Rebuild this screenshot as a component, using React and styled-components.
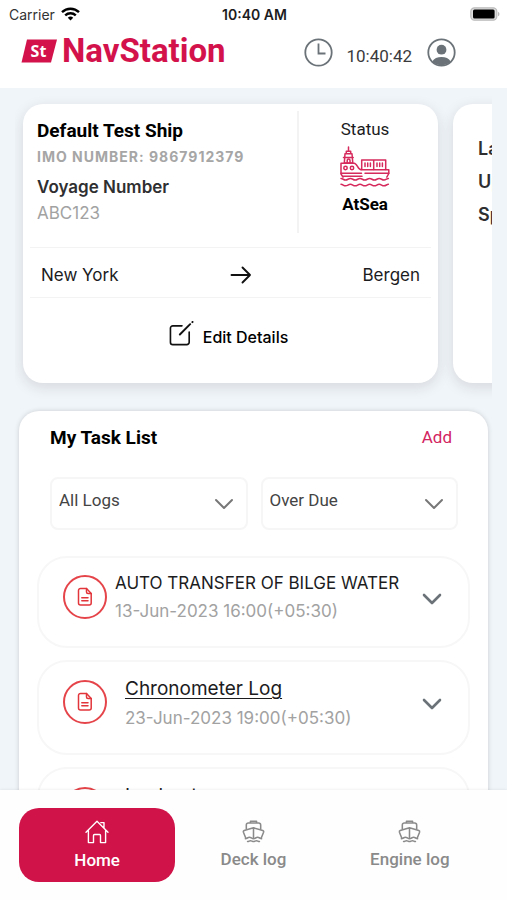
import React from "react";
import styled, { createGlobalStyle, css } from "styled-components";

const GlobalStyle = createGlobalStyle`
  *, *::before, *::after { box-sizing: border-box; }
  body {
    margin: 0;
    background: #f0f5f9;
    color: #1c1c1e;
    font-family: Inter, "Liberation Sans", sans-serif;
  }
  button, select { font: inherit; color: inherit; }
  h1, h2, p { margin: 0; }
`;

const roboto = css`
  font-family: Roboto, "Liberation Sans", sans-serif;
`;

const Screen = styled.div`
  display: flex;
  flex-direction: column;
  height: 100vh;
  overflow: hidden;
`;

const StatusBar = styled.div`
  display: grid;
  grid-template-columns: 1fr auto 1fr;
  align-items: center;
  height: 28px;
  padding: 0 7px 0 9px;
  background: #fff;
  font-size: 14px;
`;

const Carrier = styled.span`
  display: flex;
  align-items: center;
  gap: 6px;
  color: #333;
`;

const StatusTime = styled.span`
  font-size: 14px;
  font-weight: 600;
`;

const Battery = styled.svg`
  justify-self: end;
`;

const Header = styled.header`
  display: flex;
  flex: none;
  align-items: flex-start;
  justify-content: space-between;
  height: 60px;
  padding: 8px 51px 0 21px;
  background: #fff;
`;

const Brand = styled.a`
  display: flex;
  align-items: center;
  gap: 5px;
  color: #d3124c;
  text-decoration: none;
`;

const BrandName = styled.span`
  ${roboto}
  font-size: 33px;
  font-weight: 700;
  line-height: 30px;
`;

const HeaderTools = styled.div`
  display: flex;
  align-items: center;
  gap: 13px;
  color: #6b7378;
`;

const Clock = styled.time`
  ${roboto}
  padding: 8px 2px 0 0;
  font-size: 17px;
  line-height: 24px;
  color: #3a3a3c;
`;

const IconButton = styled.button`
  display: flex;
  align-items: center;
  justify-content: center;
  padding: 0;
  border: 0;
  background: none;
  color: #6b7378;
  cursor: pointer;
`;

const Content = styled.main`
  flex: 1;
  min-height: 0;
  overflow: hidden;
`;

const Carousel = styled.section`
  display: flex;
  gap: 15px;
  margin: 0 15px;
  padding: 16px 0 28px 8px;
  overflow: hidden;
`;

const Card = styled.article`
  flex: 0 0 88.5%;
  padding: 0 7px;
  border-radius: 20px;
  background: #fff;
  box-shadow: 0 4px 14px rgba(40, 30, 30, 0.13);
`;

const Voyage = styled.div`
  display: grid;
  grid-template-columns: 1fr 134px;
  height: 144px;
  border-bottom: 1px solid #f3f3f3;
`;

const ShipInfo = styled.div`
  padding: 15px 0 0 7px;
`;

const ShipName = styled.h2`
  ${roboto}
  font-size: 19px;
  font-weight: 700;
  line-height: 24px;
  color: #000;
`;

const ImoNumber = styled.p`
  font-size: 14px;
  font-weight: 700;
  line-height: 28px;
  letter-spacing: 1px;
  color: #a6a6a6;
`;

const FieldLabel = styled.p`
  font-size: 17px;
  font-weight: 600;
  line-height: 32px;
  color: #2f2f31;
`;

const FieldValue = styled.p`
  font-size: 17px;
  line-height: 20px;
  color: #a2a2a2;
`;

const Status = styled.div`
  display: flex;
  flex-direction: column;
  align-items: center;
  margin: 7px 0 14px;
  padding-top: 8px;
  border-left: 2px solid #f3f3f3;
`;

const StatusLabel = styled.span`
  ${roboto}
  margin-bottom: 7px;
  font-size: 17px;
  line-height: 20px;
`;

const StatusValue = styled.strong`
  ${roboto}
  margin-top: 4px;
  font-size: 17px;
  font-weight: 700;
  line-height: 24px;
  color: #000;
`;

const Route = styled.div`
  display: flex;
  align-items: center;
  justify-content: space-between;
  height: 50px;
  padding: 4px 11px 0;
  border-bottom: 1px solid #f3f3f3;
  font-size: 17px;
`;

const EditButton = styled.button`
  display: flex;
  align-items: center;
  justify-content: center;
  gap: 9px;
  width: 100%;
  height: 85px;
  padding: 0 4px 8px 0;
  border: 0;
  background: none;
  color: #000;
  font-size: 16px;
  font-weight: 500;
  cursor: pointer;

  > svg { margin-bottom: 6px; }
`;

const PositionInfo = styled.div`
  padding: 28px 0 0 18px;
  font-size: 18px;
  font-weight: 600;
  line-height: 33px;
  white-space: nowrap;
  color: #2f2f31;
`;

const TaskPanel = styled.section`
  margin: 0 19px;
  padding: 0 18px;
  border-radius: 20px;
  background: #fff;
  box-shadow: 0 0 5px rgba(0, 0, 0, 0.16);
`;

const PanelHead = styled.div`
  display: flex;
  align-items: center;
  justify-content: space-between;
  height: 52px;
  padding: 0 18px 0 13px;
`;

const PanelTitle = styled.h2`
  ${roboto}
  font-size: 19px;
  font-weight: 700;
  color: #000;
`;

const AddButton = styled.button`
  ${roboto}
  padding: 0;
  border: 0;
  background: none;
  font-size: 17px;
  color: #d3245f;
  cursor: pointer;
`;

const Filters = styled.div`
  display: grid;
  grid-template-columns: 1fr 1fr;
  gap: 13px;
  padding: 14px 12px 26px 13px;
`;

const SelectBox = styled.div`
  display: grid;
  align-items: center;

  > * { grid-area: 1 / 1; }

  > svg {
    justify-self: end;
    margin-right: 14px;
    pointer-events: none;
    color: #777;
  }
`;

const Select = styled.select`
  ${roboto}
  appearance: none;
  width: 100%;
  height: 53px;
  padding: 0 32px 8px 7px;
  border: 2px solid #f6f6f6;
  border-radius: 8px;
  background: #fff;
  color: #444;
  font-size: 17px;
`;

const TaskList = styled.ul`
  display: flex;
  flex-direction: column;
  gap: 12px;
  margin: 0;
  padding: 0;
  list-style: none;
`;

const TaskItem = styled.li`
  display: flex;
  align-items: flex-start;
  gap: ${(p) => (p.$linked ? "18px" : "8px")};
  min-height: ${(p) => (p.$linked ? "95px" : "92px")};
  padding: ${(p) => (p.$linked ? "18px" : "17px")} 26px 0 24px;
  border: 2px solid #f7f7f7;
  border-radius: 30px;
`;

const TaskBadge = styled.span`
  display: flex;
  flex: none;
  align-items: center;
  justify-content: center;
  width: 44px;
  height: 44px;
  border: 2px solid #e5454a;
  border-radius: 50%;
  color: #e2353b;
`;

const TaskText = styled.div`
  flex: 1;
  min-width: 0;
  white-space: nowrap;
`;

const TaskTitle = styled.p`
  font-size: 17px;
  line-height: 16px;
`;

const TaskLink = styled.a`
  display: block;
  font-size: 19px;
  line-height: 18px;
  color: #1c1c1e;
  text-decoration: underline;
  text-underline-offset: 3px;
  text-decoration-thickness: 1px;
`;

const TaskDate = styled.p`
  margin-top: 8px;
  font-size: 17px;
  line-height: 24px;
  color: #a2a2a2;
`;

const Expand = styled(IconButton)`
  height: 48px;
`;

const NavBar = styled.nav`
  display: grid;
  flex: none;
  grid-template-columns: repeat(3, 1fr);
  height: 110px;
  padding: 18px 19px;
  background: #fefefe;
  box-shadow: 0 0 3px rgba(0, 0, 0, 0.1);
`;

const NavItem = styled.a`
  ${roboto}
  display: flex;
  flex-direction: column;
  align-items: center;
  gap: 4px;
  padding-top: 12px;
  border-radius: 20px;
  background: ${(p) => (p.$active ? "#d01349" : "transparent")};
  color: ${(p) => (p.$active ? "#fff" : "#8a8a8a")};
  font-size: 17px;
  font-weight: 500;
  line-height: 24px;
  text-decoration: none;
`;

const LogoText = styled.text`
  font-family: "Noto Sans", sans-serif;
  font-size: 16px;
  font-weight: 700;
`;

function WifiIcon() {
  return (
    <svg width="19" height="14" viewBox="0 0 19 14" fill="none" stroke="#000" strokeWidth="2.4" aria-hidden="true">
      <path d="M1 5.2C5.8.6 13.2.6 18 5.2" />
      <path d="M4.2 8.4c3-2.8 7.6-2.8 10.6 0" />
      <path d="M6.8 10.7c1.5-1.5 3.9-1.500 5.400 0L9.500 13.600z" fill="#000" stroke="none" />
    </svg>
  );
}

function BatteryIcon() {
  return (
    <Battery width="30" height="14" viewBox="0 0 30 14" aria-label="Battery full">
      <rect x="0.8" y="0.8" width="26" height="12.4" rx="3.6" fill="#ddd" stroke="#bbb" strokeWidth="1.2" />
      <rect x="3" y="2.5" width="21.6" height="9" rx="1.5" fill="#000" />
      <path d="M28.2 4.7c1.6.8 1.6 3.8 0 4.6z" fill="#aaa" />
    </Battery>
  );
}

function LogoMark() {
  return (
    <svg width="36" height="24" viewBox="0 0 36 24" aria-hidden="true">
      <path d="M6 0.5H36L30 23.5H0.5z" fill="#d3124c" />
      <LogoText x="17.5" y="17.5" textAnchor="middle" fill="#fff">St</LogoText>
    </svg>
  );
}

function ClockIcon() {
  return (
    <svg width="29" height="29" viewBox="0 0 29 29" fill="none" stroke="currentColor" strokeWidth="1.8" aria-hidden="true">
      <circle cx="14.5" cy="14.5" r="13.2" />
      <path d="M14.5 5.5V15.5H21.5" />
    </svg>
  );
}

function UserIcon() {
  return (
    <svg width="29" height="29" viewBox="0 0 29 29" fill="none" aria-hidden="true">
      <circle cx="14.5" cy="14.5" r="13.2" stroke="currentColor" strokeWidth="1.8" />
      <circle cx="14.5" cy="11.7" r="4.9" fill="currentColor" />
      <path d="M5.3 23.5C7 20.2 10.4 19 14.5 19s7.5 1.2 9.2 4.5a13 13 0 0 1-18.4 0z" fill="currentColor" />
    </svg>
  );
}

function CargoShipIcon() {
  return (
    <svg width="50" height="42" viewBox="0 0 50 42" fill="none" stroke="#d6295c" strokeWidth="1.5" strokeLinejoin="round" strokeLinecap="round" aria-hidden="true">
      <path d="M8.5 1V5M6.3 5.2H10.7V7.8H6.3zM5 7.8H12L12.8 17H4.3zM3.5 11.5H13.2" />
      <path d="M7.2 17v-2.5a1.4 1.4 0 0 1 2.8 0V17" />
      <path d="M1 17.2H14.2C17 17.2 18 23.8 21 23.8H48.8V27.5L46.8 31.2M1 17.2V28L3 31.2" />
      <path d="M1 27.3H21.5M25 27.3H48.8M3 30.2H22" />
      <circle cx="5.5" cy="22" r="1.7" />
      <circle cx="12" cy="22" r="1.7" />
      <path d="M21.7 23.5V14H45.7V23.5M33.7 14V23.5M25 17V20.5M27.7 17V20.5M30.4 17V20.5M37 17V20.5M39.7 17V20.5M42.4 17V20.5" />
      <path d="M1 32.5c2 0 2.5 1.5 4.6 1.5s2.6-1.5 4.8-1.5 2.6 1.5 4.8 1.5 2.6-1.5 4.8-1.5 2.6 1.5 4.8 1.5 2.6-1.5 4.8-1.5 2.6 1.5 4.8 1.5 2.6-1.5 4.8-1.5 2.6 1.5 4.8 1.5 2.6-1.5 4.4-1.5" />
      <path d="M1 38.3c2 0 2.5 1.5 4.6 1.5s2.6-1.5 4.8-1.5 2.6 1.5 4.8 1.5 2.6-1.5 4.8-1.5 2.6 1.5 4.8 1.5 2.6-1.5 4.8-1.5 2.6 1.5 4.8 1.5 2.6-1.5 4.8-1.5 2.6 1.5 4.8 1.5 2.6-1.5 4.4-1.5" />
    </svg>
  );
}

function ArrowIcon() {
  return (
    <svg width="22" height="18" viewBox="0 0 22 18" fill="none" stroke="#111" strokeWidth="1.9" strokeLinecap="round" strokeLinejoin="round" aria-label="to">
      <path d="M1.5 9H20M12.5 1.5L20 9l-7.5 7.5" />
    </svg>
  );
}

function EditIcon() {
  return (
    <svg width="25" height="25" viewBox="0 0 26 26" fill="none" stroke="#111" strokeWidth="1.7" strokeLinecap="round" aria-hidden="true">
      <path d="M13.5 5H4a2.5 2.5 0 0 0-2.5 2.5V22A2.5 2.5 0 0 0 4 24.5H18.5A2.5 2.5 0 0 0 21 22V11.5" />
      <path d="M11.3 14L22 3.3M24.3 1.2l.2-.2" strokeWidth="2" />
    </svg>
  );
}

function ChevronIcon({ strokeWidth }) {
  return (
    <svg width="20" height="12" viewBox="0 0 20 12" fill="none" stroke="currentColor" strokeWidth={strokeWidth} strokeLinecap="round" strokeLinejoin="round" aria-hidden="true">
      <path d="M2 2l8 8 8-8" />
    </svg>
  );
}

function DocumentIcon() {
  return (
    <svg width="16" height="20" viewBox="0 0 16 20" fill="none" stroke="currentColor" strokeWidth="1.5" strokeLinejoin="round" strokeLinecap="round" aria-hidden="true">
      <path d="M3.5 1.5H9.5L14.2 6.5V16A2 2 0 0 1 12.2 18H3.5A2 2 0 0 1 1.5 16V3.5A2 2 0 0 1 3.5 1.5z" />
      <path d="M9.5 1.5V5A1.5 1.5 0 0 0 11 6.5H14.2M4.8 10.8H11M4.8 13.8H11" />
    </svg>
  );
}

function HomeIcon() {
  return (
    <svg width="24" height="24" viewBox="0 0 24 24" fill="none" stroke="currentColor" strokeWidth="1.4" strokeLinejoin="round" strokeLinecap="round" aria-hidden="true">
      <path d="M1 12.2L12 1.3l11 10.9M15.8 2.6H19V8M3.4 10.5V22.6H8.5V15.5a1 1 0 0 1 1-1h5a1 1 0 0 1 1 1v7.1H20.6V10.5" />
    </svg>
  );
}

function BoatIcon() {
  return (
    <svg width="23" height="23" viewBox="0 0 24 24" fill="none" stroke="currentColor" strokeWidth="1.6" strokeLinejoin="round" strokeLinecap="round" aria-hidden="true">
      <path d="M8.8 3V1.3H15.2V3M4.5 9.3V5.2A2 2 0 0 1 6.5 3.2H17.5A2 2 0 0 1 19.5 5.2V9.3" />
      <path d="M4 19L1.5 12.8C1.2 11.9 1.5 11.3 2.3 11L12 8.2 21.7 11c.8.3 1.1.9.8 1.8L20 19M12 8.2V18.2" />
      <path d="M3.5 19.5c1.7 0 2.5-1.5 4.2-1.5s2.5 1.5 4.3 1.5 2.5-1.5 4.3-1.5 2.5 1.5 4.2 1.5M5.8 22.5c1.4 0 1.9-.9 3.1-.9s1.9.9 3.1.9 1.9-.9 3.1-.9 1.7.9 3.1.9" />
    </svg>
  );
}

const tasks = [
  { title: "AUTO TRANSFER OF BILGE WATER", date: "13-Jun-2023 16:00(+05:30)", linked: false },
  { title: "Chronometer Log", date: "23-Jun-2023 19:00(+05:30)", linked: true },
  { title: "Lookout", date: "23-Jun-2023 20:00(+05:30)", linked: true },
];

const navItems = [
  { label: "Home", Icon: HomeIcon, active: true },
  { label: "Deck log", Icon: BoatIcon },
  { label: "Engine log", Icon: BoatIcon },
];

function Filter({ label, options }) {
  return (
    <SelectBox>
      <Select aria-label={label}>
        {options.map((option) => (
          <option key={option}>{option}</option>
        ))}
      </Select>
      <ChevronIcon strokeWidth={2} />
    </SelectBox>
  );
}

function Task({ title, date, linked }) {
  return (
    <TaskItem $linked={linked}>
      <TaskBadge>
        <DocumentIcon />
      </TaskBadge>
      <TaskText>
        {linked ? <TaskLink href="#log">{title}</TaskLink> : <TaskTitle>{title}</TaskTitle>}
        <TaskDate>{date}</TaskDate>
      </TaskText>
      <Expand type="button" aria-label={`Expand ${title}`}>
        <ChevronIcon strokeWidth={2.6} />
      </Expand>
    </TaskItem>
  );
}

export default function App() {
  return (
    <Screen>
      <GlobalStyle />
      <StatusBar>
        <Carrier>
          Carrier
          <WifiIcon />
        </Carrier>
        <StatusTime>10:40 AM</StatusTime>
        <BatteryIcon />
      </StatusBar>
      <Header>
        <Brand href="#home">
          <LogoMark />
          <BrandName>NavStation</BrandName>
        </Brand>
        <HeaderTools>
          <ClockIcon />
          <Clock>10:40:42</Clock>
          <IconButton type="button" aria-label="Profile">
            <UserIcon />
          </IconButton>
        </HeaderTools>
      </Header>
      <Content>
        <Carousel>
          <Card>
            <Voyage>
              <ShipInfo>
                <ShipName>Default Test Ship</ShipName>
                <ImoNumber>IMO NUMBER: 9867912379</ImoNumber>
                <FieldLabel>Voyage Number</FieldLabel>
                <FieldValue>ABC123</FieldValue>
              </ShipInfo>
              <Status>
                <StatusLabel>Status</StatusLabel>
                <CargoShipIcon />
                <StatusValue>AtSea</StatusValue>
              </Status>
            </Voyage>
            <Route>
              <span>New York</span>
              <ArrowIcon />
              <span>Bergen</span>
            </Route>
            <EditButton type="button">
              <EditIcon />
              Edit Details
            </EditButton>
          </Card>
          <Card>
            <PositionInfo>
              <p>Last</p>
              <p>Updated</p>
              <p>Speed</p>
            </PositionInfo>
          </Card>
        </Carousel>
        <TaskPanel>
          <PanelHead>
            <PanelTitle>My Task List</PanelTitle>
            <AddButton type="button">Add</AddButton>
          </PanelHead>
          <Filters>
            <Filter label="Log type" options={["All Logs", "Deck log", "Engine log"]} />
            <Filter label="Due state" options={["Over Due", "Upcoming"]} />
          </Filters>
          <TaskList>
            {tasks.map((task) => (
              <Task key={task.title} {...task} />
            ))}
          </TaskList>
        </TaskPanel>
      </Content>
      <NavBar>
        {navItems.map(({ label, Icon, active }) => (
          <NavItem key={label} href="#nav" $active={active} aria-current={active ? "page" : undefined}>
            <Icon />
            {label}
          </NavItem>
        ))}
      </NavBar>
    </Screen>
  );
}
